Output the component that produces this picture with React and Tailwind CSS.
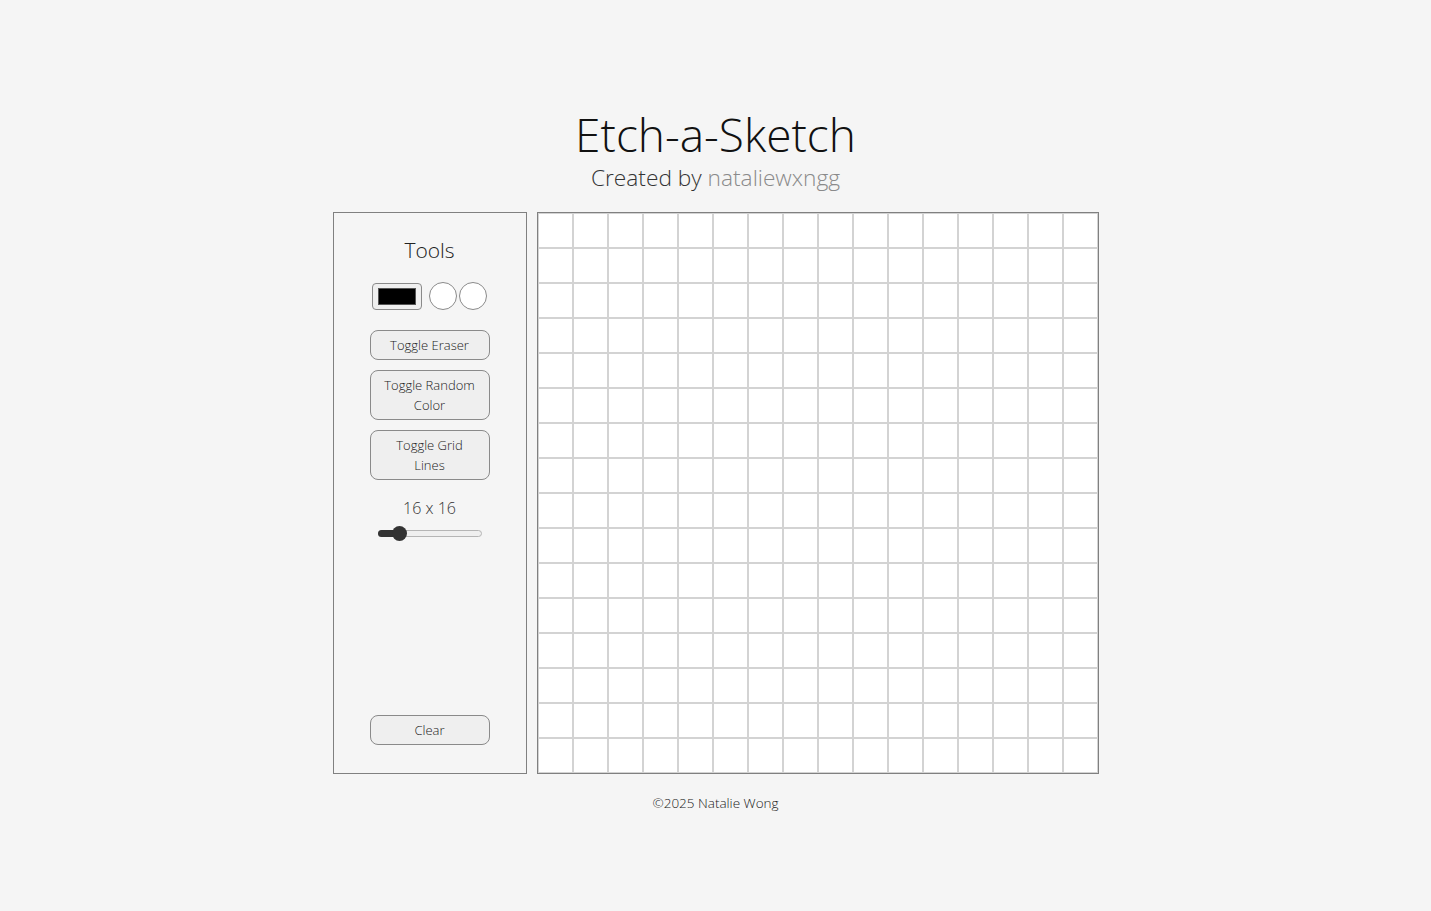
export default function App() {
  const cells = Array.from({ length: 256 });
  const font = { fontFamily: '"Open Sans", "Noto Sans", sans-serif' };

  return (
    <div
      className="min-h-[911px] bg-[#f5f5f5] flex flex-col items-center text-[#111] font-light"
      style={font}
    >
      {/* Header */}
      <div className="mt-[106px] flex flex-col items-center">
        <h1 className="text-[46px] leading-[56px] font-light">Etch-a-Sketch</h1>
        <p className="mt-[2px] text-[22.7px] leading-[28px] text-[#333]">
          Created by <span className="text-[#8a8a8a]">nataliewxngg</span>
        </p>
      </div>

      {/* Main */}
      <div className="mt-[20px] flex gap-[10px]">
        {/* Tools panel */}
        <div className="w-[194px] h-[562px] border border-[#808080] flex flex-col items-center pt-[23px] pb-[28px]">
          <h2 className="text-[21px] leading-[28px] text-[#222]">Tools</h2>

          <div className="mt-[18px] flex items-center">
            <div className="w-[50px] h-[27px] rounded-[4px] border border-[#8a8a8a] bg-[#efefef] flex items-center justify-center">
              <div className="w-[38px] h-[17px] bg-black border border-[#555]" />
            </div>
            <div className="ml-[7px] w-[28px] h-[28px] rounded-full bg-white border border-[#8a8a8a]" />
            <div className="ml-[2px] w-[28px] h-[28px] rounded-full bg-white border border-[#8a8a8a]" />
          </div>

          <div className="mt-[20px] flex flex-col gap-[10px]">
            <button className="w-[120px] h-[30px] rounded-[8px] border border-[#8a8a8a] bg-[#efefef] text-[13px] leading-[20px] text-[#222]">
              Toggle Eraser
            </button>
            <button className="w-[120px] h-[50px] rounded-[8px] border border-[#8a8a8a] bg-[#efefef] text-[13px] leading-[20px] text-[#222] px-2">
              Toggle Random Color
            </button>
            <button className="w-[120px] h-[50px] rounded-[8px] border border-[#8a8a8a] bg-[#efefef] text-[13px] leading-[20px] text-[#222] px-4">
              Toggle Grid Lines
            </button>
          </div>

          <div className="mt-[16px] text-[16px] leading-[24px] text-[#333]">16 x 16</div>

          {/* Slider */}
          <div className="mt-[6px] relative w-[104px] h-[14px] flex items-center">
            <div className="w-full h-[7px] rounded-full bg-[#efefef] border border-[#b5b5b5]" />
            <div className="absolute left-0 w-[22px] h-[7px] rounded-l-full bg-[#333]" />
            <div className="absolute left-[14px] w-[15px] h-[15px] rounded-full bg-[#333]" />
          </div>

          <div className="flex-1" />

          <button className="w-[120px] h-[30px] rounded-[8px] border border-[#8a8a8a] bg-[#efefef] text-[13px] leading-[20px] text-[#222]">
            Clear
          </button>
        </div>

        {/* Grid */}
        <div className="border border-[#808080] bg-white grid grid-cols-[repeat(16,35px)]">
          {cells.map((_, i) => (
            <div key={i} className="w-[35px] h-[35px] border border-[#d3d3d3] bg-white" />
          ))}
        </div>
      </div>

      <footer className="mt-[20px] text-[13.5px] leading-[18px] text-[#222]">©2025 Natalie Wong</footer>
    </div>
  );
}
